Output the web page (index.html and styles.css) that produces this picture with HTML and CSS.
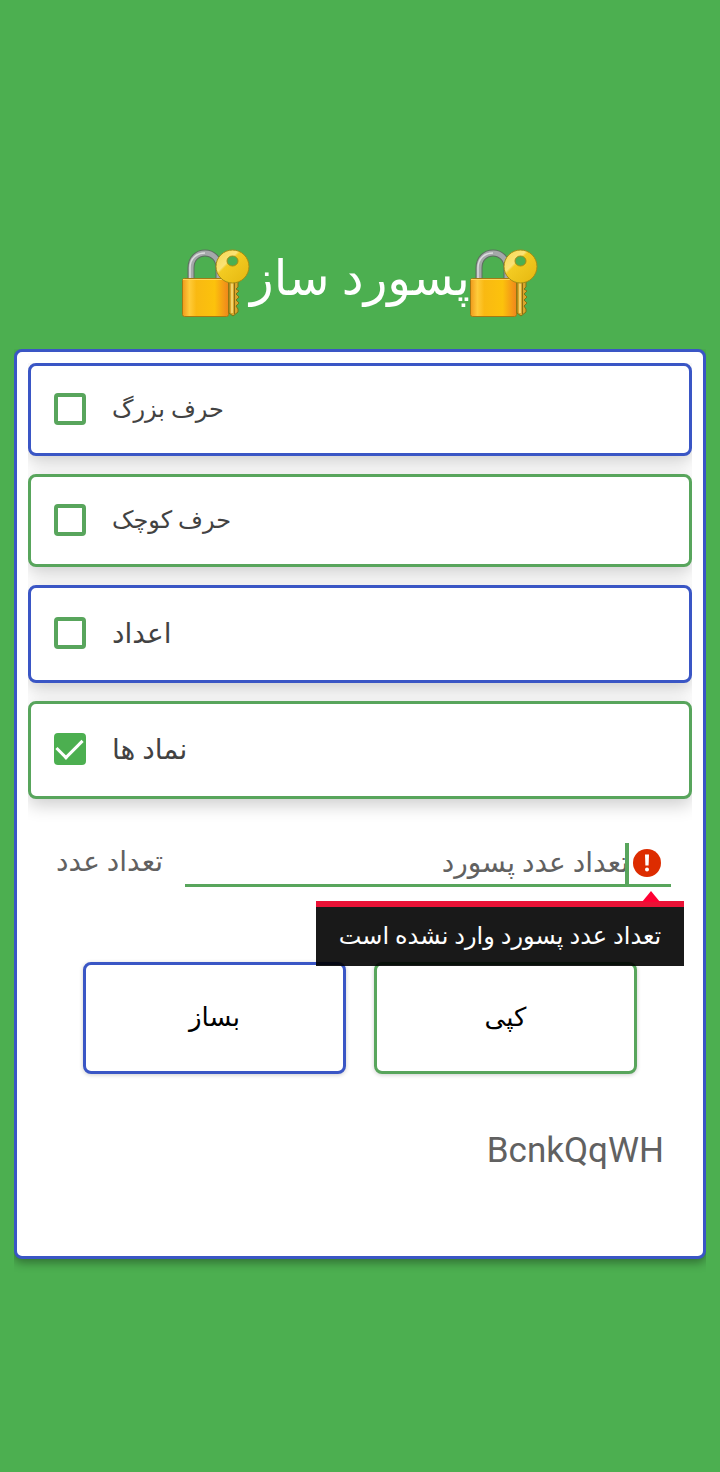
FILE: index.html
```html
<!DOCTYPE html>
<html lang="fa">
  <head>
    <meta charset="UTF-8" />
    <meta name="viewport" content="width=device-width, initial-scale=1.0" />
    <title>پسورد ساز</title>
    <link rel="stylesheet" href="styles.css">
  </head>

  <body>
    <svg class="defs" aria-hidden="true">
      <defs>
        <linearGradient id="gold" x1="0" x2="1" y1="0" y2="0">
          <stop offset="0" stop-color="#f09a1c" />
          <stop offset="0.15" stop-color="#ffcb3a" />
          <stop offset="0.3" stop-color="#f9b912" />
          <stop offset="0.7" stop-color="#fcc20c" />
          <stop offset="1" stop-color="#f0861c" />
        </linearGradient>
        <linearGradient id="key" x1="0" x2="1" y1="0" y2="1">
          <stop offset="0" stop-color="#f7d84a" />
          <stop offset="0.35" stop-color="#fbe276" />
          <stop offset="0.4" stop-color="#f3cb22" />
          <stop offset="1" stop-color="#e5b70f" />
        </linearGradient>
        <symbol id="lock" viewBox="0 0 68 68">
          <path d="M9 30V19C9 -1 37 -1 37 19V30" fill="none" stroke="#5c6f5f" stroke-width="7" />
          <path d="M9 30V19C9 -1 37 -1 37 19V30" fill="none" stroke="#a5a8aa" stroke-width="5" />
          <path d="M8 30V19C8 9 15 4 23 4" fill="none" stroke="#dcdcde" stroke-width="1.5" />
          <rect x="0.5" y="29.500" width="46" height="38" rx="2" fill="url(#gold)" stroke="#a47a12" />
          <path d="M1 30.500H46" stroke="#ffd65c" />
          <path d="M47 30H56V38L54 40L57 42L54 45L57 48L54 51L57 54L54 57L56 60V63L51 67L47 64Z" fill="#d9a62c" stroke="#7d7413" />
          <path d="M50 33V64" stroke="#f3d46c" stroke-width="2" />
          <path d="M52.500 34V65" stroke="#8d6a12" />
          <path fill-rule="evenodd" d="M50.500 1A16.500 16.500 0 1 1 50.500 34A16.500 16.500 0 1 1 50.500 1ZM50.500 7A5.500 5 0 1 0 50.500 17A5.500 5 0 1 0 50.500 7Z" fill="url(#key)" stroke="#a48c14" />
        </symbol>
      </defs>
    </svg>

    <h1 class="title">
      <svg class="lock" aria-hidden="true"><use href="#lock" /></svg>
      <span dir="rtl">پسورد ساز</span>
      <svg class="lock" aria-hidden="true"><use href="#lock" /></svg>
    </h1>

    <main class="card">
      <div class="options">
        <label class="option blue"><input type="checkbox" id="upper"><span>حرف بزرگ</span></label>
        <label class="option green"><input type="checkbox" id="lower"><span>حرف کوچک</span></label>
        <label class="option blue tall"><input type="checkbox" id="numbers"><span>اعداد</span></label>
        <label class="option green tall"><input type="checkbox" id="symbols" checked><span>نماد ها</span></label>
      </div>

      <div class="length">
        <label for="length">تعداد عدد</label>
        <div class="field">
          <input type="text" id="length" dir="rtl" inputmode="numeric" placeholder="تعداد عدد پسورد" aria-describedby="error">
          <span class="caret"></span>
          <svg class="error-icon" viewBox="0 0 28 28" aria-hidden="true">
            <circle cx="14" cy="14" r="14" fill="#dd2c00" />
            <path d="M12 5.500H16L15.600 16.500H12.400Z" fill="#fff" />
            <circle cx="14" cy="20.500" r="2" fill="#fff" />
          </svg>
          <div class="error" id="error" role="alert" dir="rtl">تعداد عدد پسورد وارد نشده است</div>
        </div>
      </div>

      <div class="buttons">
        <button type="button" class="blue" id="make">بساز</button>
        <button type="button" class="green" id="copy">کپی</button>
      </div>

      <output class="result" id="result">BcnkQqWH</output>
    </main>
  </body>
</html>
```
FILE: styles.css
```css
* {
  box-sizing: border-box;
}
body {
  margin: 0;
  padding: 0 14px;
  min-height: 100vh;
  display: flex;
  flex-direction: column;
  justify-content: center;
  background-color: #4caf50;
  font-family: Roboto, "Noto Sans", "DejaVu Sans", sans-serif;
  font-size: 26px;
  color: #424242;
}
.defs {
  position: absolute;
  width: 0;
  height: 0;
}
.title {
  display: flex;
  justify-content: center;
  align-items: center;
  margin: 0;
  padding: 34px 0 30px;
  font-size: 49px;
  font-weight: 400;
  line-height: 64px;
  color: #fff;
}
.title span {
  padding-bottom: 8px;
}
.lock {
  width: 68px;
  height: 68px;
}
.blue {
  border: 3px solid #3a56c5;
}
.green {
  border: 3px solid #58a55c;
}
.card {
  padding: 11px 11px 81px;
  border: 3px solid #3a56c5;
  border-radius: 8px;
  background-color: #fff;
  box-shadow: 0 4px 10px rgba(0, 0, 0, 0.35);
  clip-path: inset(0 0 -20px 0);
}

.options {
  display: flex;
  flex-direction: column;
  gap: 18px;
  clip-path: inset(0 0 -30px 0);
}
.option {
  display: flex;
  align-items: center;
  gap: 26px;
  height: 93px;
  padding: 0 23px 2px;
  border-radius: 8px;
  background-color: #fff;
  box-shadow: 0 6px 18px rgba(0, 0, 0, 0.2);
  font-size: 24px;
}
.option.tall {
  height: 98px;
  font-size: 28px;
}
.option input {
  appearance: none;
  flex: none;
  width: 32px;
  height: 32px;
  margin: 0;
  border: 4px solid #58a55c;
  border-radius: 4px;
}
.option input:checked {
  display: grid;
  place-items: center;
  border-color: #4caf50;
  background-color: #4caf50;
}
.option input:checked::before {
  content: "";
  width: 22px;
  height: 12px;
  border: solid #fff;
  border-width: 0 0 3px 3px;
  transform: translate(-1px, -4px) rotate(-45deg);
}

.length {
  display: flex;
  align-items: center;
  gap: 22px;
  margin-top: 37px;
  padding: 0 21px 0 28px;
  font-size: 28px;
  color: #616161;
}
.field {
  position: relative;
  flex: 1;
}
.field input {
  display: block;
  width: 100%;
  height: 51px;
  padding: 4px 42px 0 0;
  border: 0;
  border-bottom: 3px solid #58a55c;
  outline: 0;
  background: none;
  font: inherit;
}
.field input::placeholder {
  color: #616161;
  opacity: 1;
}
.caret {
  position: absolute;
  right: 42px;
  bottom: 3px;
  width: 4px;
  height: 41px;
  background-color: #58a55c;
}
.error-icon {
  position: absolute;
  right: 10px;
  top: 13px;
  width: 28px;
  height: 28px;
}
.error {
  position: absolute;
  z-index: 1;
  top: 65px;
  right: -13px;
  width: 368px;
  border-top: 6px solid #ea1236;
  background-color: rgba(0, 0, 0, 0.9);
  color: #fff;
  font-size: 24px;
  line-height: 59px;
  text-align: center;
  white-space: nowrap;
}
.error::before {
  content: "";
  position: absolute;
  right: 24px;
  bottom: 100%;
  margin-bottom: 5px;
  border: 9px solid transparent;
  border-top: 0;
  border-bottom: 11px solid #ff0033;
}

.buttons {
  display: flex;
  gap: 28px;
  margin-top: 75px;
  padding: 0 55px;
}
.buttons button {
  flex: 1;
  height: 112px;
  padding-bottom: 4px;
  border-radius: 8px;
  background-color: #fff;
  box-shadow: 0 1px 4px rgba(0, 0, 0, 0.2);
  color: #000;
  font: inherit;
}
.result {
  display: block;
  margin-top: 53px;
  padding: 0 28px;
  color: #616161;
  font-size: 35px;
  line-height: 48px;
  text-align: right;
}
```
